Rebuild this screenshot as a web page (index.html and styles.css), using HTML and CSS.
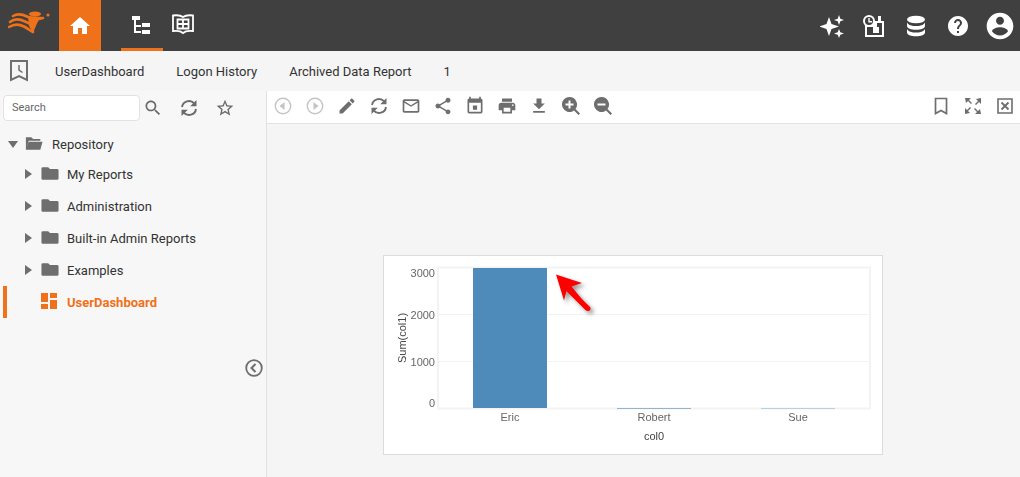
FILE: index.html
```html
<!DOCTYPE html>
<html lang="en">

<head>
    <meta charset="UTF-8">
    <meta name="viewport" content="width=device-width, initial-scale=1.0">
    <title>UserDashboard</title>
    <link rel="stylesheet" href="styles.css">
</head>

<body>
    <header class="main-header">
        <div class="logo">
            <svg width="44" height="26" viewBox="0 0 44 26">
                <path class="logo-wave" d="M5 6C10 3 14 4 19 6.500S28 10 35 8" />
                <path class="logo-wave" d="M2 12C7 8 12 9 17 11.500S24 15 29 11" />
                <path class="logo-wave" d="M1 17C6 14 11 14 16 16.500S22 21 25 22" />
                <path class="logo-fill" d="M20 6L36 7 30 11 25 23 21 16z" />
                <ellipse class="logo-fill" cx="27" cy="4" rx="6" ry="2.500" />
                <circle class="logo-fill" cx="40" cy="5" r="1.600" />
            </svg>
        </div>
        <a class="header-tab home-tab" href="#">
            <svg class="icon-24" viewBox="0 0 24 24"><path d="M10 20v-6h4v6h5v-8h3L12 3 2 12h3v8z" /></svg>
        </a>
        <a class="header-tab tree-tab" href="#">
            <svg class="icon-24" viewBox="0 0 24 24">
                <path d="M2 4h8v4H2zM4 8h2v5h5v2H6v4h5v2H4zM12 11h8v4h-8zM12 18h8v4h-8z" />
            </svg>
        </a>
        <a class="header-tab book-tab" href="#">
            <svg class="icon-24" viewBox="0 0 24 24">
                <path d="M2 3.500C6 3 10 3.500 12 5C14 3.500 18 3 22 3.500V19C18 18.500 14 19 12 21C10 19 6 18.500 2 19Z" fill="none" stroke="currentColor" stroke-width="1.800" />
                <path d="M6.500 7.500h11v9h-11zM12 7.500v9M6.500 12h11" fill="none" stroke="currentColor" stroke-width="1.800" />
            </svg>
        </a>
        <div class="header-right">
            <a class="header-icon" href="#">
                <svg class="icon-24" viewBox="0 0 24 24">
                    <path d="M9 3 L11.500 10 L19 12.500 L11.500 15 L9 22 L6.500 15 L-1 12.500 L6.500 10 Z" />
                    <path d="M19 1 L20.300 4.700 L24 6 L20.300 7.300 L19 11 L17.700 7.300 L14 6 L17.700 4.700 Z" />
                    <path d="M19 15 L20.300 18.200 L24 19.500 L20.300 20.800 L19 24 L17.700 20.800 L14 19.500 L17.700 18.200 Z" />
                </svg>
            </a>
            <a class="header-icon" href="#">
                <svg class="icon-24" viewBox="0 0 24 24">
                    <path d="M3 7h19v16H3zM5 13v8h15V9h-5v4z" fill-rule="evenodd" />
                    <circle cx="7" cy="7" r="6" />
                    <circle class="clock-face" cx="7" cy="7" r="4" />
                    <path d="M6.300 4h1.400v3H10v1.400H6.300z" />
                    <path d="M11 13h6v6h-6zM16 2h3v5h-3z" />
                </svg>
            </a>
            <a class="header-icon" href="#">
                <svg class="icon-24" viewBox="0 0 24 24">
                    <ellipse cx="12" cy="5.500" rx="9" ry="3.800" />
                    <path d="M3 8.500c1 2.500 5 3.600 9 3.600s8-1.100 9-3.600v3.500c0 2.200-4 3.800-9 3.800s-9-1.600-9-3.800z" />
                    <path d="M3 15c1 2.500 5 3.600 9 3.600s8-1.100 9-3.600v3.500c0 2.200-4 3.800-9 3.800s-9-1.600-9-3.800z" />
                </svg>
            </a>
            <a class="header-icon" href="#">
                <svg class="icon-24" viewBox="0 0 24 24"><path d="M12 2C6.480 2 2 6.480 2 12s4.480 10 10 10 10-4.480 10-10S17.520 2 12 2zm1 17h-2v-2h2v2zm2.070-7.750l-.9.920C13.450 12.900 13 13.500 13 15h-2v-.5c0-1.100.45-2.100 1.170-2.830l1.240-1.260c.37-.36.59-.86.59-1.410 0-1.100-.9-2-2-2s-2 .9-2 2H8c0-2.210 1.790-4 4-4s4 1.790 4 4c0 .88-.36 1.680-.93 2.250z" /></svg>
            </a>
            <a class="header-icon" href="#">
                <svg class="icon-32" viewBox="0 0 24 24"><path d="M12 2C6.480 2 2 6.480 2 12s4.480 10 10 10 10-4.480 10-10S17.520 2 12 2zm0 3c1.660 0 3 1.340 3 3s-1.340 3-3 3-3-1.340-3-3 1.340-3 3-3zm0 14.200c-2.500 0-4.710-1.280-6-3.220.03-1.990 4-3.080 6-3.080 1.990 0 5.970 1.090 6 3.080-1.290 1.940-3.500 3.220-6 3.220z" /></svg>
            </a>
        </div>
    </header>

    <nav class="tabs">
        <svg class="tabs-icon" viewBox="0 0 18 22">
            <path d="M1 1h16v19l-8-4-8 4z" fill="none" stroke-width="2" />
            <path d="M9 5v5l3.500 2.500" fill="none" stroke-width="1.500" />
        </svg>
        <a href="#">UserDashboard</a>
        <a href="#">Logon History</a>
        <a href="#">Archived Data Report</a>
        <a href="#">1</a>
    </nav>

    <div class="content">
        <aside class="sidebar">
            <div class="search-row">
                <input class="search-input" type="text" placeholder="Search">
                <button class="side-btn search-btn"><svg class="icon-20" viewBox="0 0 24 24"><path d="M15.500 14h-.79l-.28-.27C15.410 12.590 16 11.110 16 9.500 16 5.910 13.090 3 9.500 3S3 5.910 3 9.500 5.910 16 9.500 16c1.610 0 3.090-.59 4.230-1.570l.27.28v.79l5 4.990L20.490 19l-4.990-5zm-6 0C7.010 14 5 11.990 5 9.500S7.010 5 9.500 5 14 7.010 14 9.500 11.990 14 9.500 14z" /></svg></button>
                <button class="side-btn"><svg class="icon-20" viewBox="0 0 20 20"><path class="sync-arc" d="M3 9A7 7 0 0 1 15.200 5.400M17 11A7 7 0 0 1 4.800 14.600" /><path d="M17.500 2v6.300h-6.300zM2.500 18v-6.300h6.300z" /></svg></button>
                <button class="side-btn"><svg class="icon-20" viewBox="0 0 24 24"><path d="M22 9.240l-7.190-.62L12 2 9.190 8.630 2 9.240l5.460 4.730L5.820 21 12 17.270 18.180 21l-1.630-7.030L22 9.240zM12 15.400l-3.760 2.270 1-4.280-3.320-2.880 4.380-.38L12 6.100l1.710 4.040 4.380.38-3.320 2.880 1 4.280L12 15.400z" /></svg></button>
            </div>

            <ul class="tree">
                <li class="tree-root">
                    <span class="caret caret-down"></span>
                    <svg class="folder" viewBox="0 0 20 16"><path d="M1 1h6l2 2h8v2H4L2 13l2-7h15.500L17 15H1z" /></svg>
                    <span>Repository</span>
                </li>
                <li class="tree-item">
                    <span class="caret"></span>
                    <svg class="folder" viewBox="0 0 20 16"><path d="M2 1h6l2 2h8q1.500 0 1.500 1.500v9q0 1.500-1.500 1.500H2q-1.500 0-1.500-1.500v-11Q.5 1 2 1z" /></svg>
                    <span>My Reports</span>
                </li>
                <li class="tree-item">
                    <span class="caret"></span>
                    <svg class="folder" viewBox="0 0 20 16"><path d="M2 1h6l2 2h8q1.500 0 1.500 1.500v9q0 1.500-1.500 1.500H2q-1.500 0-1.500-1.500v-11Q.5 1 2 1z" /></svg>
                    <span>Administration</span>
                </li>
                <li class="tree-item">
                    <span class="caret"></span>
                    <svg class="folder" viewBox="0 0 20 16"><path d="M2 1h6l2 2h8q1.500 0 1.500 1.500v9q0 1.500-1.500 1.500H2q-1.500 0-1.500-1.500v-11Q.5 1 2 1z" /></svg>
                    <span>Built-in Admin Reports</span>
                </li>
                <li class="tree-item">
                    <span class="caret"></span>
                    <svg class="folder" viewBox="0 0 20 16"><path d="M2 1h6l2 2h8q1.500 0 1.500 1.500v9q0 1.500-1.500 1.500H2q-1.500 0-1.500-1.500v-11Q.5 1 2 1z" /></svg>
                    <span>Examples</span>
                </li>
                <li class="tree-item active">
                    <svg class="dash-icon" viewBox="0 0 16 16"><path d="M0 0h7v9H0zM0 11h7v5H0zM9 7h7v9H9zM9 0h7v5H9z" /></svg>
                    <span>UserDashboard</span>
                </li>
            </ul>

            <button class="collapse-btn">
                <svg width="18" height="18" viewBox="0 0 18 18">
                    <circle cx="9" cy="9" r="7.800" fill="none" stroke-width="1.800" />
                    <path d="M10.500 5L6.500 9l4 4" fill="none" stroke-width="2" />
                </svg>
            </button>
        </aside>

        <main class="viewer">
            <div class="toolbar">
                <button class="tool-btn disabled"><svg class="icon-20" viewBox="0 0 20 20"><circle cx="10" cy="10" r="7.700" fill="none" stroke="currentColor" stroke-width="1.400" /><path d="M11.500 6v8l-5-4z" /></svg></button>
                <button class="tool-btn disabled"><svg class="icon-20" viewBox="0 0 20 20"><circle cx="10" cy="10" r="7.700" fill="none" stroke="currentColor" stroke-width="1.400" /><path d="M8.500 6v8l5-4z" /></svg></button>
                <button class="tool-btn"><svg class="icon-20" viewBox="0 0 24 24"><path d="M3 17.250V21h3.750L17.810 9.940l-3.750-3.750L3 17.250zM20.710 7.040c.39-.39.39-1.020 0-1.410l-2.340-2.340c-.39-.39-1.020-.39-1.410 0l-1.830 1.830 3.750 3.750 1.830-1.830z" /></svg></button>
                <button class="tool-btn"><svg class="icon-20" viewBox="0 0 20 20"><path class="sync-arc" d="M3 9A7 7 0 0 1 15.200 5.400M17 11A7 7 0 0 1 4.800 14.600" /><path d="M17.500 2v6.300h-6.300zM2.500 18v-6.300h6.300z" /></svg></button>
                <button class="tool-btn"><svg class="icon-20" viewBox="0 0 24 24"><path d="M20 4H4c-1.100 0-2 .9-2 2v12c0 1.100.9 2 2 2h16c1.100 0 2-.9 2-2V6c0-1.100-.9-2-2-2zm0 14H4V8l8 5 8-5v10zm-8-7L4 6h16l-8 5z" /></svg></button>
                <button class="tool-btn"><svg class="icon-20" viewBox="0 0 24 24"><path d="M18 16.080c-.76 0-1.440.3-1.960.77L8.910 12.700c.05-.23.09-.46.09-.7s-.04-.47-.09-.7l7.050-4.110c.54.5 1.250.81 2.040.81 1.660 0 3-1.340 3-3s-1.340-3-3-3-3 1.340-3 3c0 .24.04.47.09.7L8.040 9.810C7.500 9.310 6.790 9 6 9c-1.660 0-3 1.340-3 3s1.340 3 3 3c.79 0 1.500-.31 2.040-.81l7.120 4.160c-.05.21-.08.43-.08.65 0 1.610 1.310 2.920 2.920 2.920 1.610 0 2.920-1.310 2.920-2.920s-1.310-2.920-2.920-2.920z" /></svg></button>
                <button class="tool-btn"><svg class="icon-20" viewBox="0 0 24 24"><path d="M14.500 11.500h-5v5h5zM17 1v2H7V1H5v2c-1.100 0-2 .9-2 2v14c0 1.100.9 2 2 2h14c1.100 0 2-.9 2-2V5c0-1.100-.9-2-2-2V1zm2 18H5V8h14z" /></svg></button>
                <button class="tool-btn"><svg class="icon-20" viewBox="0 0 24 24"><path d="M19 8H5c-1.660 0-3 1.340-3 3v6h4v4h12v-4h4v-6c0-1.660-1.340-3-3-3zm-3 11H8v-5h8v5zm3-7c-.55 0-1-.45-1-1s.45-1 1-1 1 .45 1 1-.45 1-1 1zm-1-9H6v4h12V3z" /></svg></button>
                <button class="tool-btn"><svg class="icon-20" viewBox="0 0 24 24"><path d="M19 9h-4V3H9v6H5l7 7 7-7zM5 18v2h14v-2H5z" /></svg></button>
                <button class="tool-btn"><svg class="icon-20" viewBox="0 0 20 20"><path d="M8.500 1a7.500 7.500 0 0 1 6 12l4.500 4.500-1.500 1.500-4.500-4.500a7.500 7.500 0 1 1-4.500-13.500zM7.500 4.500v3h-3v2h3v3h2v-3h3v-2h-3v-3z" fill-rule="evenodd" /></svg></button>
                <button class="tool-btn"><svg class="icon-20" viewBox="0 0 20 20"><path d="M8.500 1a7.500 7.500 0 0 1 6 12l4.500 4.500-1.500 1.500-4.500-4.500a7.500 7.500 0 1 1-4.500-13.500zM4.500 7.500v2h8v-2z" fill-rule="evenodd" /></svg></button>
                <div class="toolbar-right">
                    <button class="tool-btn"><svg class="icon-20" viewBox="0 0 20 20"><path d="M4.500 2.500h11v15l-5.500-3-5.500 3z" fill="none" stroke="currentColor" stroke-width="1.700" /></svg></button>
                    <button class="tool-btn"><svg class="icon-20" viewBox="0 0 20 20"><path d="M2 2h6L6 4l3 3-1 1-3-3-2 2zM18 2v6l-2-2-3 3-1-1 3-3-2-2zM2 18v-6l2 2 3-3 1 1-3 3 2 2zM18 18h-6l2-2-3-3 1-1 3 3 2-2z" /></svg></button>
                    <button class="tool-btn"><svg class="icon-20" viewBox="0 0 20 20"><path d="M3 3h14v14H3z" fill="none" stroke="currentColor" stroke-width="1.600" /><path d="M6.500 6.500l7 7M13.500 6.500l-7 7" fill="none" stroke="currentColor" stroke-width="1.800" /></svg></button>
                </div>
            </div>

            <div class="report-area">
                <div class="chart-card">
                    <svg class="chart" width="498" height="198" viewBox="384 256 498 198">
                        <rect class="plot-frame" x="438" y="267.500" width="432" height="141" />
                        <path class="grid-line" d="M439 314.500H869M439 361.500H869" />
                        <rect class="bar" x="473" y="268" width="74" height="140" />
                        <rect class="bar-thin" x="617" y="408" width="74" height="1" />
                        <rect class="bar-faint" x="761" y="408" width="74" height="1" />
                        <g class="tick-labels">
                            <text x="435" y="277" text-anchor="end">3000</text>
                            <text x="435" y="319" text-anchor="end">2000</text>
                            <text x="435" y="366" text-anchor="end">1000</text>
                            <text x="435" y="407" text-anchor="end">0</text>
                            <text x="510" y="421" text-anchor="middle">Eric</text>
                            <text x="654" y="421" text-anchor="middle">Robert</text>
                            <text x="798" y="421" text-anchor="middle">Sue</text>
                        </g>
                        <text class="axis-title" x="654" y="440" text-anchor="middle">col0</text>
                        <text class="axis-title" transform="translate(406 338) rotate(-90)" text-anchor="middle">Sum(col1)</text>
                        <g class="arrow">
                            <path d="M556 274.500L582 283 571.500 286.500 589.500 308.500 586 310.500 566.500 291 564 300.500z" />
                            <path d="M568 289L588 308.500" fill="none" stroke="#f00" stroke-width="5" stroke-linecap="round" />
                        </g>
                    </svg>
                </div>
            </div>
        </main>
    </div>
</body>

</html>
```

FILE: styles.css
```css
:root {
    --primary-color: #ef7119;
    --header-color: #404040;
    --background-color: #f5f5f5;
    --icon-color: #6e6e6e;
}

* {
    box-sizing: border-box;
}

html,
body {
    height: 100%;
}

body {
    font-family: Roboto, "Liberation Sans", sans-serif;
    background-color: var(--background-color);
    margin: 0;
    padding: 0;
    color: #333;
    display: flex;
    flex-direction: column;
    overflow: hidden;
}

button {
    background: none;
    border: none;
    padding: 0;
    display: flex;
    align-items: center;
    justify-content: center;
    color: var(--icon-color);
}

svg {
    display: block;
    fill: currentColor;
}

.icon-20 {
    width: 20px;
    height: 20px;
}

.icon-24 {
    width: 24px;
    height: 24px;
}

.icon-32 {
    width: 32px;
    height: 32px;
}

.sync-arc {
    fill: none;
    stroke: currentColor;
    stroke-width: 1.900;
}

/* top bar */
.main-header {
    height: 51px;
    flex: none;
    background-color: var(--header-color);
    color: white;
    display: flex;
    align-items: stretch;
}

.logo {
    width: 59px;
    padding-left: 8px;
    display: flex;
    align-items: center;
}

.logo svg {
    margin-top: -6px;
}

.logo-fill {
    fill: #ef7119;
}

.logo-wave {
    fill: none;
    stroke: #ef7119;
    stroke-width: 2.600;
    stroke-linecap: round;
}

.header-tab {
    width: 42px;
    display: flex;
    align-items: center;
    justify-content: center;
    color: white;
}

.home-tab {
    background-color: var(--primary-color);
    margin-right: 20px;
}

.tree-tab {
    border-bottom: 3px solid var(--primary-color);
}

.book-tab {
    margin-left: -1px;
    padding-bottom: 3px;
}

.header-right {
    margin-left: auto;
    margin-right: -1px;
    display: flex;
    align-items: center;
}

.header-icon {
    width: 42px;
    display: flex;
    justify-content: center;
    color: white;
}

.clock-face {
    fill: var(--header-color);
}

/* report tabs */
.tabs {
    height: 40px;
    flex: none;
    display: flex;
    align-items: center;
    gap: 32px;
    padding-left: 10px;
    font-size: 13px;
}

.tabs a {
    color: #333;
    text-decoration: none;
}

.tabs-icon {
    width: 18px;
    height: 22px;
    margin-right: -5px;
    margin-top: -1px;
    fill: none;
    stroke: var(--icon-color);
}

.content {
    flex: 1;
    display: flex;
    min-height: 0;
}

/* left panel */
.sidebar {
    width: 267px;
    flex: none;
    position: relative;
    border-right: 1px solid #e2e2e2;
    background-color: #f7f7f7;
}

.search-row {
    display: flex;
    align-items: center;
    padding: 4px 0 0 3px;
}

.search-input {
    width: 137px;
    height: 26px;
    padding: 0 8px 2px;
    border: 1px solid #e2e2e2;
    border-radius: 4px;
    background-color: white;
    font-family: inherit;
    font-size: 11px;
}

.search-input::placeholder {
    color: #666;
    opacity: 1;
}

.side-btn {
    width: 36px;
    height: 26px;
    color: #6a6a6a;
}

.search-btn {
    width: 26px;
}

.side-btn + .side-btn {
    margin-left: 0;
}

.search-btn + .side-btn {
    margin-left: 5px;
}

.tree {
    list-style-type: none;
    margin: 9px 0 0;
    padding: 0;
    font-size: 13px;
}

.tree li {
    display: flex;
    align-items: center;
}

.tree-root {
    height: 28px;
    padding-left: 8px;
    margin-top: 2px;
}

.tree-root .folder {
    margin-left: 7px;
    margin-right: 9px;
}

.tree-item {
    height: 32px;
    padding-left: 25px;
}

.caret {
    width: 0;
    height: 0;
    border-style: solid;
    border-width: 5px 0 5px 7px;
    border-color: transparent transparent transparent var(--icon-color);
}

.caret-down {
    border-width: 7px 5px 0 5px;
    border-color: var(--icon-color) transparent transparent transparent;
}

.folder {
    width: 18px;
    height: 15px;
    margin: -2px 8px 0 9px;
    color: var(--icon-color);
}

.tree-item.active {
    margin-left: 3px;
    padding-left: 34px;
    border-left: 4px solid var(--primary-color);
    color: var(--primary-color);
    font-weight: 700;
}

.dash-icon {
    width: 16px;
    height: 16px;
    margin-right: 10px;
    margin-top: -2px;
}

.collapse-btn {
    position: absolute;
    right: 3px;
    top: 268px;
    color: var(--icon-color);
}

.collapse-btn svg {
    fill: none;
    stroke: currentColor;
}

/* report viewer */
.viewer {
    flex: 1;
    min-width: 0;
    display: flex;
    flex-direction: column;
}

.toolbar {
    height: 33px;
    flex: none;
    display: flex;
    align-items: center;
    padding-bottom: 2px;
    background-color: white;
    border-bottom: 1px solid #e2e2e2;
}

.tool-btn {
    width: 32px;
    height: 30px;
}

.tool-btn.disabled {
    color: #c4c4c4;
}

.toolbar-right {
    margin-left: auto;
    margin-right: -1px;
    display: flex;
}

.report-area {
    flex: 1;
    padding: 131px 0 0 116px;
}

.chart-card {
    width: 500px;
    height: 200px;
    background-color: white;
    border: 1px solid #dcdcdc;
}

.plot-frame {
    fill: white;
    stroke: #f3f3f3;
    stroke-width: 2;
}

.grid-line {
    fill: none;
    stroke: #f2f2f2;
}

.bar {
    fill: #4e8bba;
}

.bar-thin {
    fill: #8fb5d3;
}

.bar-faint {
    fill: #b6cfe2;
}

.tick-labels text,
.axis-title {
    font-family: "Liberation Sans", Arial, sans-serif;
    font-size: 11px;
    fill: #666;
    filter: blur(0.25px);
}

.axis-title {
    fill: #444;
}

.arrow {
    fill: #f00;
    filter: drop-shadow(3px 3px 2px rgba(0, 0, 0, 0.4));
}
```
